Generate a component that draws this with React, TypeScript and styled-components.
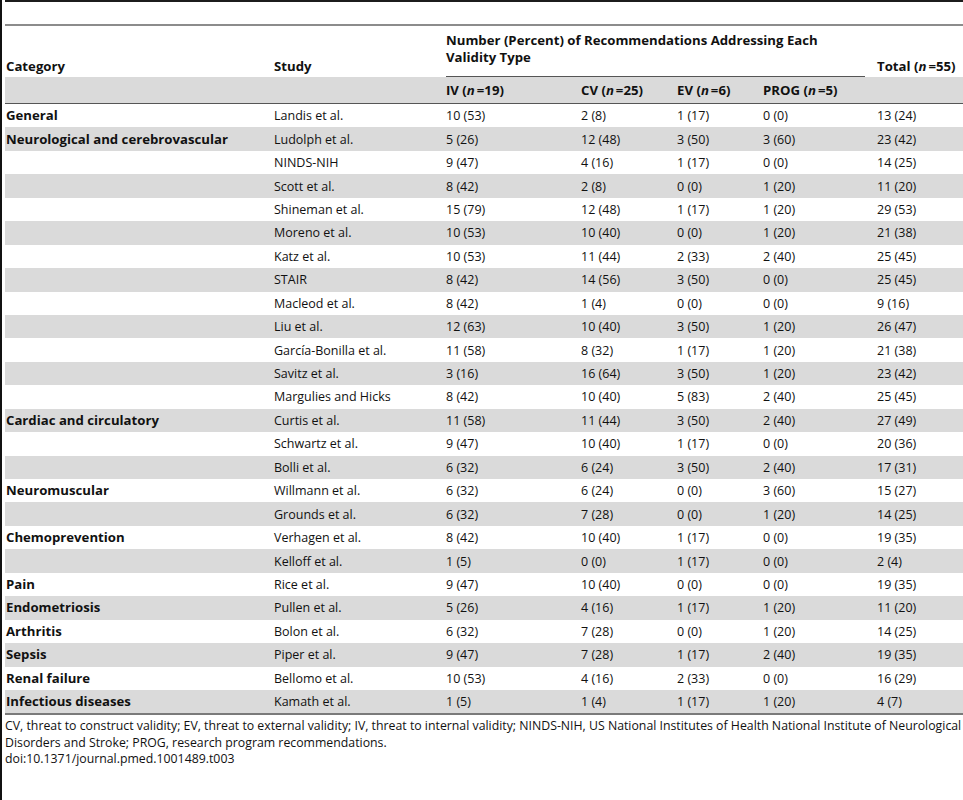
import styled, { createGlobalStyle } from "styled-components";

const GlobalStyle = createGlobalStyle`
    html, body {
        margin: 0;
        padding: 0;
        background: #fff;
        overflow: hidden;
    }
    body {
        font-family: "Open Sans", "Liberation Sans", sans-serif;
        color: #111;
    }
`;

const Frame = styled.div`
    width: 961px;
    height: 800px;
    border-left: 2px solid #111;
    padding-left: 3px;
    overflow: hidden;
`;

const TopBar = styled.div`
    width: 980px;
    height: 22px;
    border-top: 2px solid #1c1c1c;
    border-bottom: 2px solid #8c8c8c;
`;

const Table = styled.table`
    width: 975px;
    table-layout: fixed;
    border-collapse: collapse;
    font-size: 12.5px;
    border-bottom: 2px solid #7a7a7a;
`;

const HeadCell = styled.th<{ $pad?: number }>`
    text-align: left;
    font-weight: bold;
    font-size: 13.2px;
    vertical-align: bottom;
    white-space: nowrap;
    padding: 0 0 ${({ $pad }) => $pad ?? 0}px 1px;
    line-height: 17px;
`;

const GroupHead = styled.div`
    margin-right: 11px;
    padding: 6px 0 10px;
    border-bottom: 1px solid #555;
    line-height: 17px;
`;

const SubRow = styled.tr`
    background: #dadada;
    border-bottom: 1.5px solid #555;
`;

const SubCell = styled.th`
    text-align: left;
    font-weight: bold;
    font-size: 13.2px;
    white-space: nowrap;
    height: 26px;
    padding: 0 0 0 1px;
`;

const Row = styled.tr<{ $shade: boolean }>`
    background: ${({ $shade }) => ($shade ? "#dadada" : "#fff")};
`;

const Cell = styled.td<{ $bold?: boolean }>`
    height: 23.45px;
    padding: 0 0 0 1px;
    font-weight: ${({ $bold }) => ($bold ? "bold" : "normal")};
    font-size: ${({ $bold }) => ($bold ? "13.2px" : "12.5px")};
    white-space: nowrap;
    line-height: 17px;
`;

const N = styled.i`
    font-style: italic;
    margin-right: 2px;
`;

const Footnote = styled.div`
    width: 960px;
    font-size: 12.3px;
    line-height: 16.5px;
    padding-top: 3px;
    color: #111;
`;

const widths = [268, 172, 135, 96, 86, 114, 104];

type R = [string, string, string, string, string, string, string];

const rows: R[] = [
    ["General", "Landis et al.", "10 (53)", "2 (8)", "1 (17)", "0 (0)", "13 (24)"],
    ["Neurological and cerebrovascular", "Ludolph et al.", "5 (26)", "12 (48)", "3 (50)", "3 (60)", "23 (42)"],
    ["", "NINDS-NIH", "9 (47)", "4 (16)", "1 (17)", "0 (0)", "14 (25)"],
    ["", "Scott et al.", "8 (42)", "2 (8)", "0 (0)", "1 (20)", "11 (20)"],
    ["", "Shineman et al.", "15 (79)", "12 (48)", "1 (17)", "1 (20)", "29 (53)"],
    ["", "Moreno et al.", "10 (53)", "10 (40)", "0 (0)", "1 (20)", "21 (38)"],
    ["", "Katz et al.", "10 (53)", "11 (44)", "2 (33)", "2 (40)", "25 (45)"],
    ["", "STAIR", "8 (42)", "14 (56)", "3 (50)", "0 (0)", "25 (45)"],
    ["", "Macleod et al.", "8 (42)", "1 (4)", "0 (0)", "0 (0)", "9 (16)"],
    ["", "Liu et al.", "12 (63)", "10 (40)", "3 (50)", "1 (20)", "26 (47)"],
    ["", "García-Bonilla et al.", "11 (58)", "8 (32)", "1 (17)", "1 (20)", "21 (38)"],
    ["", "Savitz et al.", "3 (16)", "16 (64)", "3 (50)", "1 (20)", "23 (42)"],
    ["", "Margulies and Hicks", "8 (42)", "10 (40)", "5 (83)", "2 (40)", "25 (45)"],
    ["Cardiac and circulatory", "Curtis et al.", "11 (58)", "11 (44)", "3 (50)", "2 (40)", "27 (49)"],
    ["", "Schwartz et al.", "9 (47)", "10 (40)", "1 (17)", "0 (0)", "20 (36)"],
    ["", "Bolli et al.", "6 (32)", "6 (24)", "3 (50)", "2 (40)", "17 (31)"],
    ["Neuromuscular", "Willmann et al.", "6 (32)", "6 (24)", "0 (0)", "3 (60)", "15 (27)"],
    ["", "Grounds et al.", "6 (32)", "7 (28)", "0 (0)", "1 (20)", "14 (25)"],
    ["Chemoprevention", "Verhagen et al.", "8 (42)", "10 (40)", "1 (17)", "0 (0)", "19 (35)"],
    ["", "Kelloff et al.", "1 (5)", "0 (0)", "1 (17)", "0 (0)", "2 (4)"],
    ["Pain", "Rice et al.", "9 (47)", "10 (40)", "0 (0)", "0 (0)", "19 (35)"],
    ["Endometriosis", "Pullen et al.", "5 (26)", "4 (16)", "1 (17)", "1 (20)", "11 (20)"],
    ["Arthritis", "Bolon et al.", "6 (32)", "7 (28)", "0 (0)", "1 (20)", "14 (25)"],
    ["Sepsis", "Piper et al.", "9 (47)", "7 (28)", "1 (17)", "2 (40)", "19 (35)"],
    ["Renal failure", "Bellomo et al.", "10 (53)", "4 (16)", "2 (33)", "0 (0)", "16 (29)"],
    ["Infectious diseases", "Kamath et al.", "1 (5)", "1 (4)", "1 (17)", "1 (20)", "4 (7)"],
];

const Count = ({ label, n }: { label: string; n: number }) => (
    <>
        {label} (<N>n</N>=<span>{n}</span>)
    </>
);

export default function App() {
    return (
        <>
            <GlobalStyle />
            <Frame>
                <TopBar />
                <Table>
                    <colgroup>
                        {widths.map((w, i) => (
                            <col key={i} style={{ width: w }} />
                        ))}
                    </colgroup>
                    <thead>
                        <tr>
                            <HeadCell $pad={2}>Category</HeadCell>
                            <HeadCell $pad={2}>Study</HeadCell>
                            <HeadCell colSpan={4}>
                                <GroupHead>
                                    Number (Percent) of Recommendations Addressing Each
                                    <br />
                                    Validity Type
                                </GroupHead>
                            </HeadCell>
                            <HeadCell $pad={2}>
                                <Count label="Total" n={55} />
                            </HeadCell>
                        </tr>
                        <SubRow>
                            <SubCell />
                            <SubCell />
                            <SubCell>
                                <Count label="IV" n={19} />
                            </SubCell>
                            <SubCell>
                                <Count label="CV" n={25} />
                            </SubCell>
                            <SubCell>
                                <Count label="EV" n={6} />
                            </SubCell>
                            <SubCell>
                                <Count label="PROG" n={5} />
                            </SubCell>
                            <SubCell />
                        </SubRow>
                    </thead>
                    <tbody>
                        {rows.map((r, i) => (
                            <Row key={i} $shade={i % 2 === 1}>
                                {r.map((c, j) => (
                                    <Cell key={j} $bold={j === 0}>
                                        {c}
                                    </Cell>
                                ))}
                            </Row>
                        ))}
                    </tbody>
                </Table>
                <Footnote>
                    CV, threat to construct validity; EV, threat to external validity; IV, threat to internal
                    validity; NINDS-NIH, US National Institutes of Health National Institute of Neurological
                    Disorders and Stroke; PROG, research program recommendations.
                    <br />
                    doi:10.1371/journal.pmed.1001489.t003
                </Footnote>
            </Frame>
        </>
    );
}
